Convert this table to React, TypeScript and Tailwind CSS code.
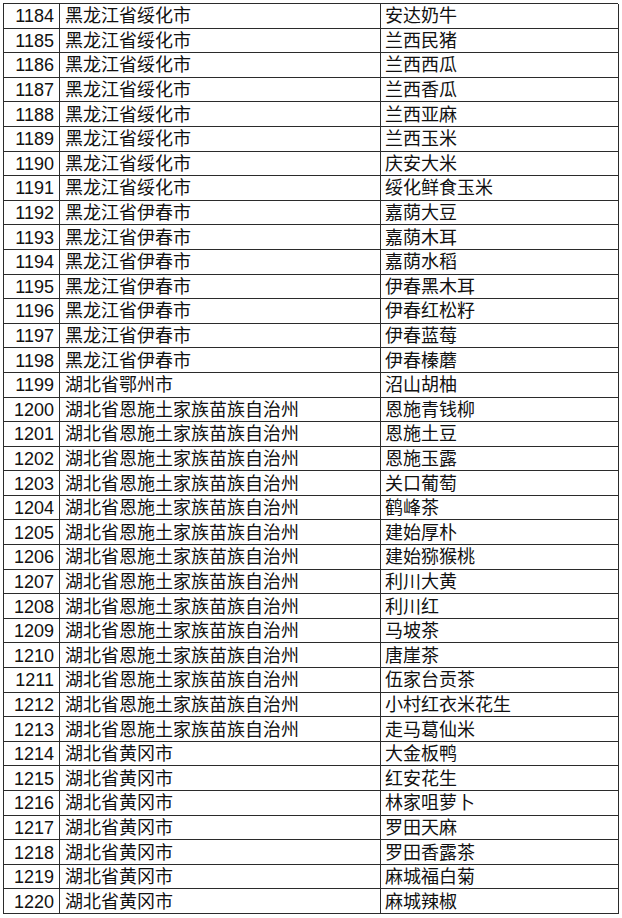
import React from "react";

const rows: [number, string, string][] = [
  [1184, "黑龙江省绥化市", "安达奶牛"],
  [1185, "黑龙江省绥化市", "兰西民猪"],
  [1186, "黑龙江省绥化市", "兰西西瓜"],
  [1187, "黑龙江省绥化市", "兰西香瓜"],
  [1188, "黑龙江省绥化市", "兰西亚麻"],
  [1189, "黑龙江省绥化市", "兰西玉米"],
  [1190, "黑龙江省绥化市", "庆安大米"],
  [1191, "黑龙江省绥化市", "绥化鲜食玉米"],
  [1192, "黑龙江省伊春市", "嘉荫大豆"],
  [1193, "黑龙江省伊春市", "嘉荫木耳"],
  [1194, "黑龙江省伊春市", "嘉荫水稻"],
  [1195, "黑龙江省伊春市", "伊春黑木耳"],
  [1196, "黑龙江省伊春市", "伊春红松籽"],
  [1197, "黑龙江省伊春市", "伊春蓝莓"],
  [1198, "黑龙江省伊春市", "伊春榛蘑"],
  [1199, "湖北省鄂州市", "沼山胡柚"],
  [1200, "湖北省恩施土家族苗族自治州", "恩施青钱柳"],
  [1201, "湖北省恩施土家族苗族自治州", "恩施土豆"],
  [1202, "湖北省恩施土家族苗族自治州", "恩施玉露"],
  [1203, "湖北省恩施土家族苗族自治州", "关口葡萄"],
  [1204, "湖北省恩施土家族苗族自治州", "鹤峰茶"],
  [1205, "湖北省恩施土家族苗族自治州", "建始厚朴"],
  [1206, "湖北省恩施土家族苗族自治州", "建始猕猴桃"],
  [1207, "湖北省恩施土家族苗族自治州", "利川大黄"],
  [1208, "湖北省恩施土家族苗族自治州", "利川红"],
  [1209, "湖北省恩施土家族苗族自治州", "马坡茶"],
  [1210, "湖北省恩施土家族苗族自治州", "唐崖茶"],
  [1211, "湖北省恩施土家族苗族自治州", "伍家台贡茶"],
  [1212, "湖北省恩施土家族苗族自治州", "小村红衣米花生"],
  [1213, "湖北省恩施土家族苗族自治州", "走马葛仙米"],
  [1214, "湖北省黄冈市", "大金板鸭"],
  [1215, "湖北省黄冈市", "红安花生"],
  [1216, "湖北省黄冈市", "林家咀萝卜"],
  [1217, "湖北省黄冈市", "罗田天麻"],
  [1218, "湖北省黄冈市", "罗田香露茶"],
  [1219, "湖北省黄冈市", "麻城福白菊"],
  [1220, "湖北省黄冈市", "麻城辣椒"],
];

export default function App() {
  return (
    <div className="w-[622px] h-[918px] bg-white pt-[3px] pl-[3px]">
      <div
        className="w-[615px] h-[911px] grid grid-cols-[56px_321px_238px] grid-rows-[repeat(37,minmax(0,1fr))] border-l border-t border-[#2b2b2b] text-[#111] text-[18px] leading-none"
        style={{ fontFamily: '"Liberation Sans", "Noto Sans CJK SC", sans-serif' }}
      >
        {rows.map(([n, a, b]) => (
          <React.Fragment key={n}>
            <div className="border-r border-b border-[#2b2b2b] flex items-center justify-end pr-[5px] pt-[1px] text-[18px]">
              {n}
            </div>
            <div className="border-r border-b border-[#2b2b2b] flex items-center pl-[5px] pt-[1px] whitespace-nowrap">
              {a}
            </div>
            <div className="border-r border-b border-[#2b2b2b] flex items-center pl-[4px] pt-[1px] whitespace-nowrap">
              {b}
            </div>
          </React.Fragment>
        ))}
      </div>
    </div>
  );
}
